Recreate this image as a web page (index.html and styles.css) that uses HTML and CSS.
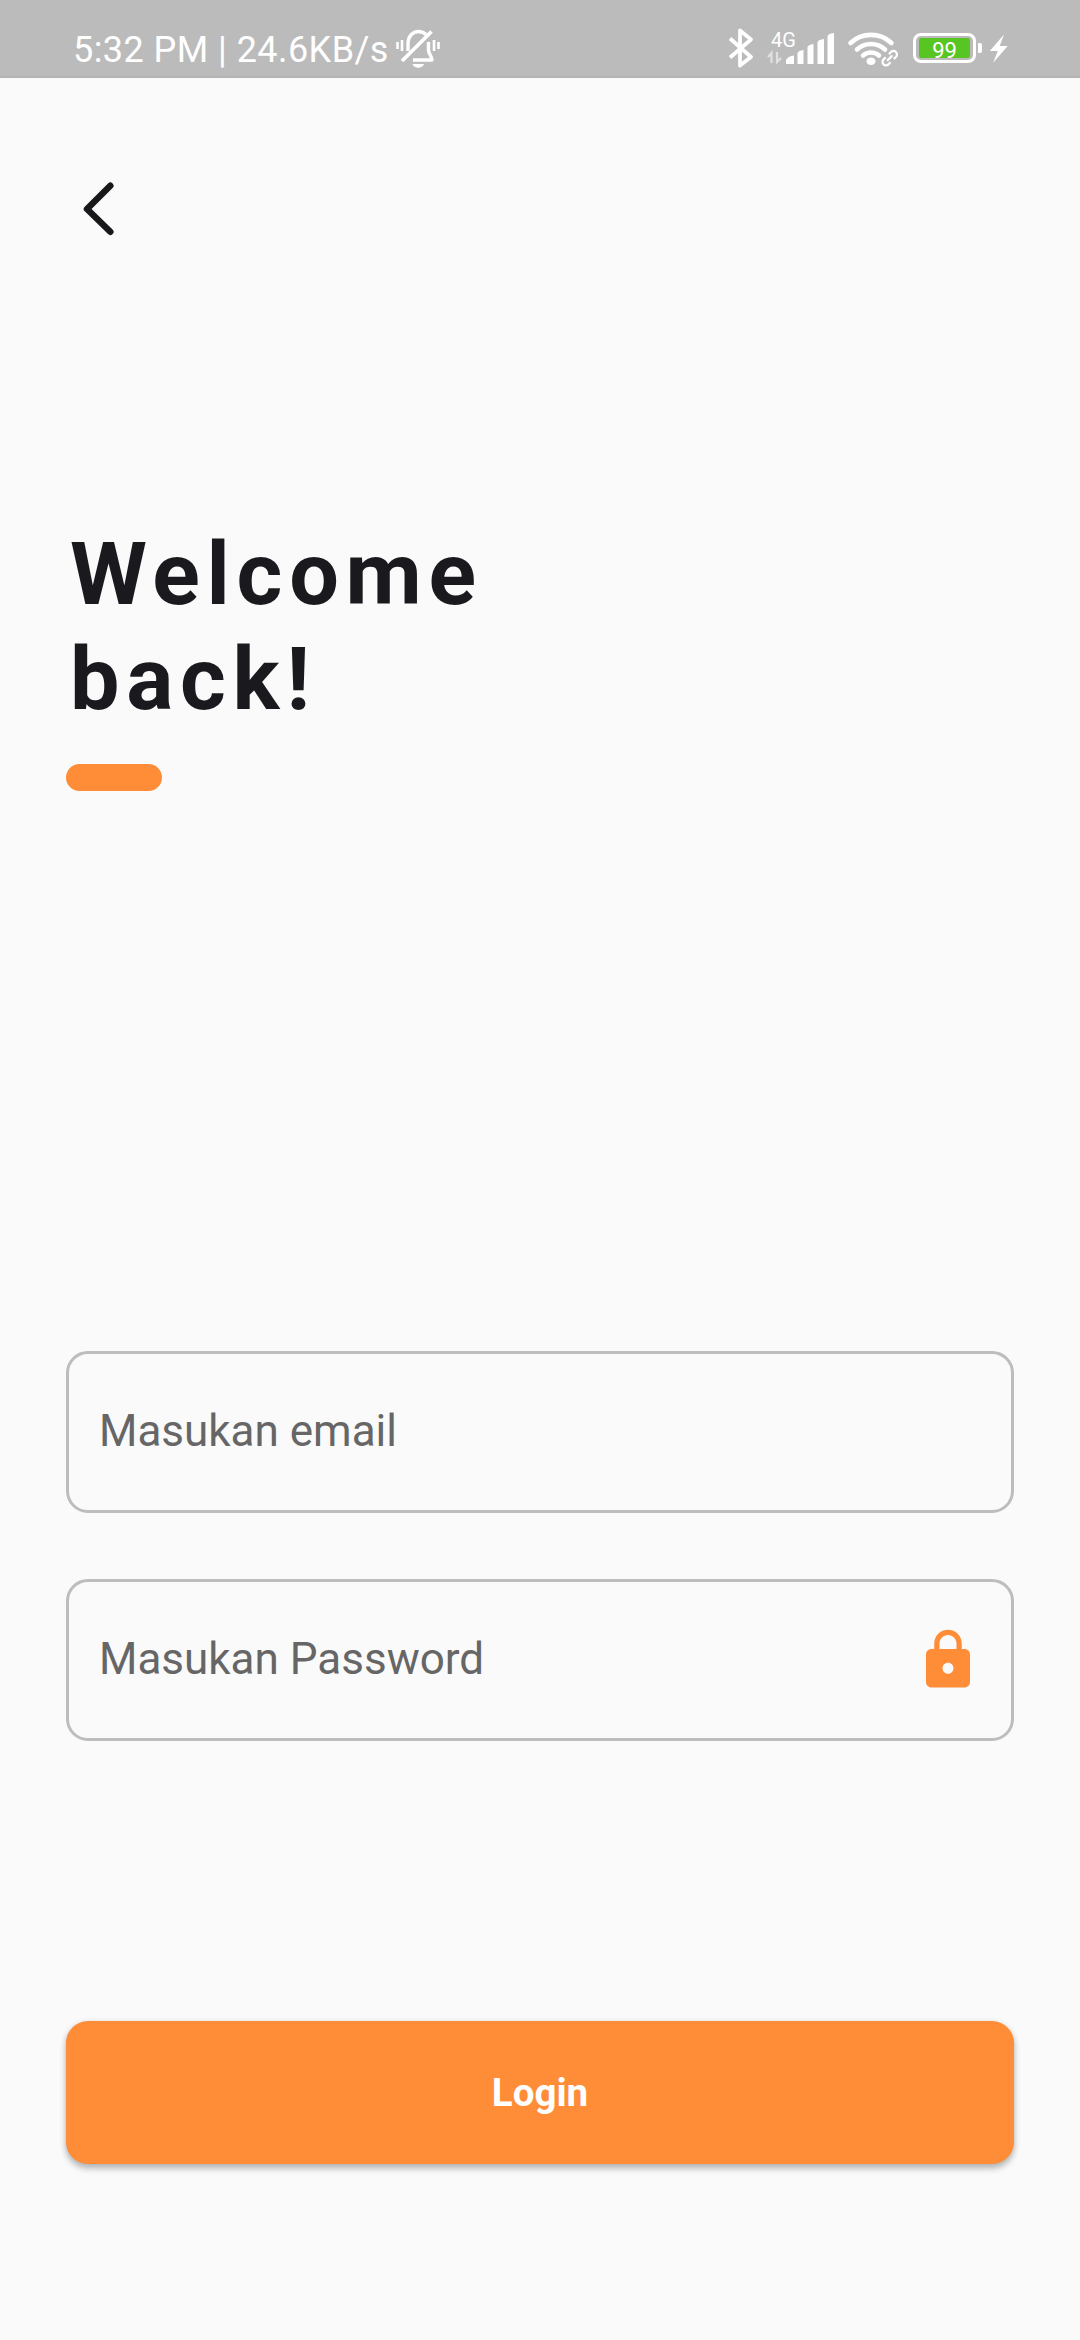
FILE: index.html
```html
<!DOCTYPE html>
<html lang="id">
<head>
<meta charset="utf-8">
<title>Login</title>
<link rel="stylesheet" href="styles.css">
</head>
<body>
<header class="status">
  <span class="status-text">5:32 PM | 24.6KB/s</span>
  <svg class="mute" width="44" height="42" viewBox="396 28 44 42" fill="none" stroke="#fff" stroke-width="3.4">
    <path d="M397.500 42v7M402 40v11M434 40v11M438.500 42v7" stroke-width="2.600"/>
    <path d="M408 51V44c0-8 5-12.500 10.500-12.500 3 0 5.500 1 7.500 3M428.500 42v8c0 4 3 5 3.500 10H413" stroke-linejoin="round"/>
    <path d="M402 61L431.500 31.500" stroke-width="3.800"/>
    <path d="M412.500 64h11.500c-1.500 5-10 5-11.500 0z" fill="#fff" stroke="none"/>
  </svg>
  <span class="spacer"></span>
  <svg class="bt" width="28" height="42" viewBox="727 27 28 42" fill="none" stroke="#fff" stroke-width="3.800" stroke-linejoin="round">
    <path d="M730 38.500L751 57 740 65.500V30.500L751 39.500 730 57.500"/>
  </svg>
  <span class="cell">
    <span class="net">4G</span>
    <svg width="68" height="42" viewBox="767 27 68 42" fill="#fff">
      <path d="M786 64v-4q2-4 8-4.500V64zM797.500 64V53q1-2.500 6-3V64zM807.500 64V47q1-2.500 6-3V64zM817.500 64V42q1-2.500 6.500-3V64zM827.500 64V36q1-2.500 6.500-3V64z"/>
      <path d="M771.500 63V53l-3.500 4M777 52v10l4-4" fill="none" stroke="#fff" stroke-opacity=".55" stroke-width="2.200"/>
    </svg>
  </span>
  <svg class="wifi" width="52" height="42" viewBox="847 27 52 42" fill="none" stroke="#fff" stroke-width="4.800">
    <path stroke-linecap="round" stroke-width="4.600" d="M850.500 43a30 30 0 0 1 41 0M857 49.500a20.500 20.500 0 0 1 28 0M863 55.500a12 12 0 0 1 16 0"/>
    <ellipse cx="871" cy="61.300" rx="4.500" ry="3.800" fill="#fff" stroke="none"/>
    <rect x="880" y="54" width="19" height="9" rx="4.500" transform="rotate(-45 889.700 58.300)" fill="#bbb" stroke="none"/>
    <g transform="rotate(-45 889.700 58.200)" stroke-width="2.200"><path d="M887.500 54.700h-3a3.500 3.500 0 0 0 0 7h3M892 54.700h3a3.500 3.500 0 0 1 0 7h-3M886 58.200h7.500"/></g>
  </svg>
  <span class="battery"><span>99</span></span>
  <i class="battery-tip"></i>
  <svg class="bolt" width="18" height="30" viewBox="990 34 18 30" fill="#fff"><path d="M1004 34.500L989.800 51h8L993 63 1007.700 46h-8z"/></svg>
</header>
<main class="page">
  <svg class="back" width="34" height="56" viewBox="80 181 34 56" fill="none" stroke="#18181b" stroke-width="6.500" stroke-linecap="round" stroke-linejoin="round"><path d="M110.300 185.800L87 209l23.300 22.800"/></svg>
  <h1 class="title">Welcome<br>back!</h1>
  <div class="accent"></div>
  <form class="form">
    <div class="field"><span class="hint">Masukan email</span></div>
    <div class="field"><span class="hint">Masukan Password</span>
      <svg width="66" height="66" viewBox="0 0 24 24" fill="#ff8c36"><path d="M18 8h-1V6c0-2.760-2.240-5-5-5S7 3.240 7 6v2H6c-1.100 0-2 .9-2 2v10c0 1.100.9 2 2 2h12c1.100 0 2-.9 2-2V10c0-1.100-.9-2-2-2zm-6 9c-1.100 0-2-.9-2-2s.9-2 2-2 2 .9 2 2-.9 2-2 2zm3.100-9H8.900V6c0-1.710 1.390-3.100 3.100-3.100 1.710 0 3.100 1.390 3.100 3.100v2z"/></svg>
    </div>
    <button class="login" type="button">Login</button>
  </form>
</main>
</body>
</html>
```
FILE: styles.css
```css
* { box-sizing: border-box; }
body {
  margin: 0;
  min-height: 2340px;
  background: #fafafa;
  font-family: Roboto, sans-serif;
  color: #1a1a1e;
}
svg { display: block; flex: none; }
.status {
  display: flex;
  align-items: flex-start;
  height: 78px;
  padding: 27px 72px 0 73px;
  background: #bbb;
  border-bottom: 2px solid #b4b4b4;
  color: #fff;
}
.status-text {
  width: 323px;
  margin-top: 1px;
  font-size: 36px;
  line-height: 45px;
  letter-spacing: 0.45px;
  white-space: nowrap;
}
.mute { margin-top: 1px; }
.spacer { flex: 1; }
.bt { margin-right: 12px; }
.cell { position: relative; margin-right: 12px; }
.net {
  position: absolute;
  left: 4px;
  top: 3px;
  font-size: 20px;
  line-height: 20px;
}
.wifi { margin-right: 14px; }
.battery {
  width: 63px;
  height: 30px;
  margin-top: 6px;
  padding: 2px 3px;
  border: 3.500px solid #fff;
  border-radius: 8px;
  background: #57c522 content-box;
  font-size: 22px;
  line-height: 25px;
  text-align: center;
}
.battery-tip {
  width: 4px;
  height: 10px;
  margin: 16px 8px 0 2px;
  border-radius: 0 2px 2px 0;
  background: #fff;
}
.bolt { margin-top: 7px; }
.page { padding: 103px 66px 0; }
.back { margin-left: 14px; }
.title {
  margin: 284px 0 0 4px;
  font-size: 88px;
  font-weight: 700;
  line-height: 105px;
  letter-spacing: 6.700px;
}
.accent {
  width: 96px;
  height: 27px;
  margin-top: 33px;
  border-radius: 14px;
  background: #ff8c36;
}
.form {
  display: flex;
  flex-direction: column;
  gap: 66px;
  margin-top: 560px;
}
.field {
  display: flex;
  align-items: center;
  justify-content: space-between;
  height: 162px;
  padding: 0 30px;
  border: 3px solid #bdbdbd;
  border-radius: 22px;
  font-size: 44px;
  line-height: 52px;
  color: #666;
}
.hint { padding-bottom: 2px; }
.login {
  height: 143px;
  margin-top: 214px;
  border: 0;
  border-radius: 22px;
  background: #ff8c36;
  box-shadow: 0 5px 6px rgba(0, 0, 0, .22), 0 1px 6px rgba(0, 0, 0, .12);
  font: 700 38.500px/46px Roboto, sans-serif;
  color: #fff;
}
```
